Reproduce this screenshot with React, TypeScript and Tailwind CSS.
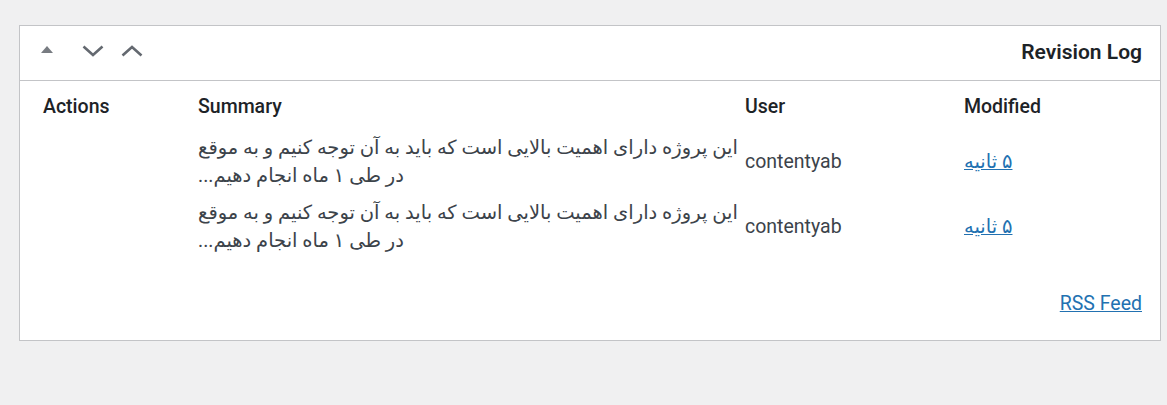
export default function App() {
  const summary1 = "این پروژه دارای اهمیت بالایی است که باید به آن توجه کنیم و به موقع";
  const summary2 = "در طی ۱ ماه انجام دهیم...";
  const Row = ({ className }: { className: string }) => (
    <div className={`grid grid-cols-[155px_547px_219px_1fr] items-center ${className}`}>
      <div></div>
      <div>
        <div dir="rtl" className="text-left whitespace-nowrap">{summary1}</div>
        <div dir="rtl" className="text-left whitespace-nowrap">{summary2}</div>
      </div>
      <div>contentyab</div>
      <div>
        <a href="#" dir="rtl" className="text-[#2271b1] underline">۵ ثانیه</a>
      </div>
    </div>
  );
  return (
    <div
      className="min-h-[405px] bg-[#f0f0f1] pt-[25px] pl-[19px]"
      style={{ fontFamily: 'Roboto, "DejaVu Sans", sans-serif' }}
    >
      <div className="w-[1142px] h-[316px] border border-[#c3c4c7] bg-white flex flex-col">
        <div className="h-[55px] border-b border-[#c3c4c7] flex justify-between pl-[21px] pr-[18px]">
          <div className="flex items-start pt-[18.5px]">
            <svg width="12" height="9" viewBox="0 0 12 9">
              <polygon points="0,8 6,1 12,8" fill="#787c82" />
            </svg>
            <svg width="22" height="12" viewBox="0 0 22 12" className="ml-[29px]">
              <polyline points="1.5,1.5 11,10 20.5,1.5" fill="none" stroke="#646970" strokeWidth="2.6" />
            </svg>
            <svg width="22" height="12" viewBox="0 0 22 12" className="ml-[17px]">
              <polyline points="1.5,10.5 11,2 20.5,10.5" fill="none" stroke="#646970" strokeWidth="2.6" />
            </svg>
          </div>
          <div className="flex items-center">
            <h2 className="text-[21px] font-semibold text-[#1d2327]">Revision Log</h2>
          </div>
        </div>
        <div className="pl-[23px] pr-[18px] text-[19.5px] leading-[27.3px] text-[#3c434a]">
          <div className="grid grid-cols-[155px_547px_219px_1fr] pt-[11.5px] font-medium text-[#1d2327]">
            <div>Actions</div>
            <div>Summary</div>
            <div>User</div>
            <div>Modified</div>
          </div>
          <Row className="mt-[14.7px]" />
          <Row className="mt-[10.4px]" />
          <div className="mt-[36px] text-right">
            <a href="#" className="text-[#2271b1] underline">RSS Feed</a>
          </div>
        </div>
      </div>
    </div>
  );
}
